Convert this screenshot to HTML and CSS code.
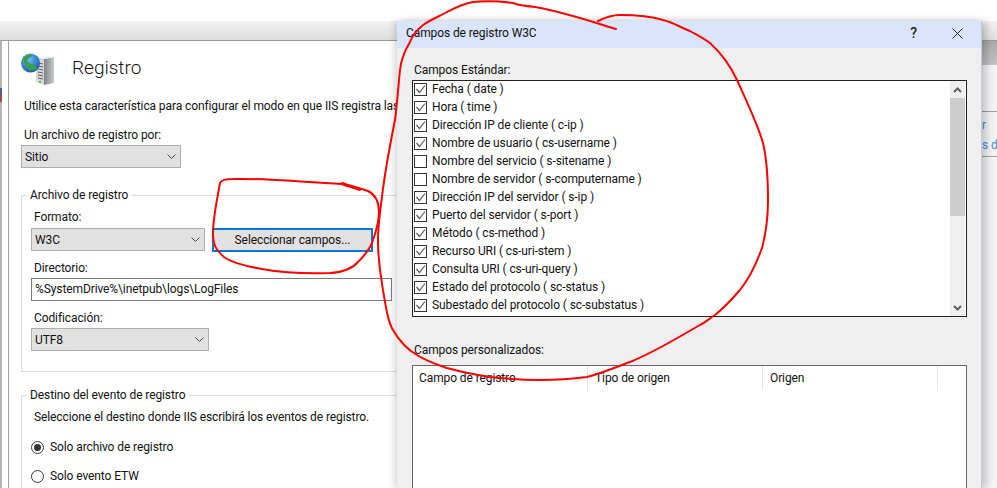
FILE: index.html
```html
<!DOCTYPE html>
<html lang="es">
<head>
<meta charset="utf-8">
<title>Registro</title>
<link rel="stylesheet" href="styles.css">
</head>
<body>
<div class="desktop">
  <div class="window">
    <div class="topbar"></div>
    <div class="workspace">
      <div class="side-strip"><div class="side-mark"></div></div>
      <main class="panel">
        <header class="panel-head">
          <svg class="iis-icon" width="34" height="34" viewBox="0 0 34 34">
            <defs>
              <linearGradient id="srv" x1="0" x2="1" y1="0" y2="0"><stop offset="0" stop-color="#7e8386"/><stop offset="1" stop-color="#c9cccd"/></linearGradient>
              <radialGradient id="glb" cx=".4" cy=".3" r=".8"><stop offset="0" stop-color="#6fc0f0"/><stop offset="1" stop-color="#0f4fa8"/></radialGradient>
            </defs>
            <path d="M24 7l10-2v26l-10 2z" fill="url(#srv)"/>
            <path d="M16 5l8 2v26l-8-3z" fill="#d5d7d8"/>
            <path d="M16 5l10-1 8 1-10 2z" fill="#f1f1f1"/>
            <path d="M18 11l5 1M18 14l5 1M18 17l5 1M18 20l5 1M18 23l5 1M18 26l5 1" stroke="#5f6366" stroke-width="1"/>
            <rect x="19" y="29" width="2" height="2" fill="#58c73a"/>
            <circle cx="10.500" cy="11" r="9.500" fill="url(#glb)"/>
            <path d="M3 7c2-3 5-5 8-5 1 2 0 3-2 4l-2 3 3 3 6 2 1 2c-2 2-5 3-8 2-1-3-5-6-6-11z" fill="#35a048"/>
          </svg>
          <h1 class="panel-title">Registro</h1>
        </header>
        <p class="intro">Utilice esta característica para configurar el modo en que IIS registra las</p>
        <label class="caption first">Un archivo de registro por:</label>
        <div class="select select-site"><span>Sitio</span>
          <svg class="chev" width="9" height="6" viewBox="0 0 9 6"><path d="M.5.500L4.500 4.500 8.500.5" fill="none" stroke="#444" stroke-width="1"/></svg>
        </div>
        <fieldset class="group group-file">
          <legend>Archivo de registro</legend>
          <label class="caption cap-fmt">Formato:</label>
          <div class="format-row">
            <div class="select select-format"><span>W3C</span>
              <svg class="chev" width="9" height="6" viewBox="0 0 9 6"><path d="M.5.500L4.500 4.500 8.500.5" fill="none" stroke="#444" stroke-width="1"/></svg>
            </div>
            <button class="btn-fields" type="button">Seleccionar campos...</button>
          </div>
          <label class="caption cap-dir">Directorio:</label>
          <div class="textbox">%SystemDrive%\inetpub\logs\LogFiles</div>
          <label class="caption cap-enc">Codificación:</label>
          <div class="select select-enc"><span>UTF8</span>
            <svg class="chev" width="9" height="6" viewBox="0 0 9 6"><path d="M.5.500L4.500 4.500 8.500.5" fill="none" stroke="#444" stroke-width="1"/></svg>
          </div>
        </fieldset>
        <fieldset class="group group-dest">
          <legend>Destino del evento de registro</legend>
          <p class="dest-text">Seleccione el destino donde IIS escribirá los eventos de registro.</p>
          <div class="radio-row"><span class="radio on"></span>Solo archivo de registro</div>
          <div class="radio-row"><span class="radio"></span>Solo evento ETW</div>
        </fieldset>
      </main>
      <aside class="right-pane">
        <div class="right-band"></div>
        <div class="right-links"><span>r</span><span>s d</span></div>
      </aside>
    </div>
  </div>

  <section class="dialog">
    <div class="dialog-title">
      <span class="dialog-name">Campos de registro W3C</span>
      <span class="help">?</span>
      <svg class="close" width="11" height="11" viewBox="0 0 11 11"><path d="M.5.5l10 10M10.500.5l-10 10" stroke="#222" stroke-width="1"/></svg>
    </div>
    <div class="dialog-body">
      <div class="dlg-label">Campos Estándar:</div>
      <div class="fields">
        <ul class="field-list">
          <li><span class="cb"><svg class="tick" width="11" height="11" viewBox="0 0 11 11"><path d="M1.500 5l3 3.500L10 1.500" fill="none" stroke="#5a5a5a" stroke-width="1.200"/></svg></span>Fecha ( date )</li>
          <li><span class="cb"><svg class="tick" width="11" height="11" viewBox="0 0 11 11"><path d="M1.500 5l3 3.500L10 1.500" fill="none" stroke="#5a5a5a" stroke-width="1.200"/></svg></span>Hora ( time )</li>
          <li><span class="cb"><svg class="tick" width="11" height="11" viewBox="0 0 11 11"><path d="M1.500 5l3 3.500L10 1.500" fill="none" stroke="#5a5a5a" stroke-width="1.200"/></svg></span>Dirección IP de cliente ( c-ip )</li>
          <li><span class="cb"><svg class="tick" width="11" height="11" viewBox="0 0 11 11"><path d="M1.500 5l3 3.500L10 1.500" fill="none" stroke="#5a5a5a" stroke-width="1.200"/></svg></span>Nombre de usuario ( cs-username )</li>
          <li><span class="cb"></span>Nombre del servicio ( s-sitename )</li>
          <li><span class="cb"></span>Nombre de servidor ( s-computername )</li>
          <li><span class="cb"><svg class="tick" width="11" height="11" viewBox="0 0 11 11"><path d="M1.500 5l3 3.500L10 1.500" fill="none" stroke="#5a5a5a" stroke-width="1.200"/></svg></span>Dirección IP del servidor ( s-ip )</li>
          <li><span class="cb"><svg class="tick" width="11" height="11" viewBox="0 0 11 11"><path d="M1.500 5l3 3.500L10 1.500" fill="none" stroke="#5a5a5a" stroke-width="1.200"/></svg></span>Puerto del servidor ( s-port )</li>
          <li><span class="cb"><svg class="tick" width="11" height="11" viewBox="0 0 11 11"><path d="M1.500 5l3 3.500L10 1.500" fill="none" stroke="#5a5a5a" stroke-width="1.200"/></svg></span>Método ( cs-method )</li>
          <li><span class="cb"><svg class="tick" width="11" height="11" viewBox="0 0 11 11"><path d="M1.500 5l3 3.500L10 1.500" fill="none" stroke="#5a5a5a" stroke-width="1.200"/></svg></span>Recurso URI ( cs-uri-stem )</li>
          <li><span class="cb"><svg class="tick" width="11" height="11" viewBox="0 0 11 11"><path d="M1.500 5l3 3.500L10 1.500" fill="none" stroke="#5a5a5a" stroke-width="1.200"/></svg></span>Consulta URI ( cs-uri-query )</li>
          <li><span class="cb"><svg class="tick" width="11" height="11" viewBox="0 0 11 11"><path d="M1.500 5l3 3.500L10 1.500" fill="none" stroke="#5a5a5a" stroke-width="1.200"/></svg></span>Estado del protocolo ( sc-status )</li>
          <li><span class="cb"><svg class="tick" width="11" height="11" viewBox="0 0 11 11"><path d="M1.500 5l3 3.500L10 1.500" fill="none" stroke="#5a5a5a" stroke-width="1.200"/></svg></span>Subestado del protocolo ( sc-substatus )</li>
        </ul>
        <div class="scrollbar">
          <div class="sb-btn"><svg width="9" height="6" viewBox="0 0 9 6"><path d="M1 5l3.500-3.500L8 5" fill="none" stroke="#606060" stroke-width="2"/></svg></div>
          <div class="sb-track"><div class="sb-thumb"></div></div>
          <div class="sb-btn"><svg width="9" height="6" viewBox="0 0 9 6"><path d="M1 1l3.500 3.500L8 1" fill="none" stroke="#606060" stroke-width="2"/></svg></div>
        </div>
      </div>
      <div class="dlg-label custom-label">Campos personalizados:</div>
      <div class="custom">
        <div class="custom-head">
          <span class="col">Campo de registro</span>
          <span class="col">Tipo de origen</span>
          <span class="col">Origen</span>
          <span class="col-end"></span>
        </div>
      </div>
    </div>
  </section>

  <svg class="annotations" width="997" height="488" viewBox="0 0 997 488" fill="none" stroke="#f00" stroke-width="2" stroke-linecap="round" stroke-linejoin="round">
    <path d="M360 190C352 187 346 186 342 184C300 182 262 178 233 179C226 179 221 180 220 183C217 200 213 218 213 233C213 245 216 250 224 257C232 263 245 266 262 269C285 273 305 274 330 273C345 272 353 268 358 262C364 256 369 250 372 243C376 232 379 220 379 212C379 203 376 195 368 191C360 188 350 186 342 183"/>
    <path d="M616 29C590 21 560 11 535 7C525 6 518 5 513 3C498 1 485 1 473 2C462 4 455 8 447 12C438 17 430 20 423 25C417 30 412 36 410 42C404 52 401 60 400 70C398 90 397 105 395 120C391 140 385 170 382 197C380 212 378 225 378 240C378 262 380 272 383 290C386 308 388 322 393 330C400 342 408 350 417 355C428 362 438 365 447 368C462 372 476 375 490 377C508 379 525 380 540 380C558 380 572 379 587 377C603 373 616 367 630 362C655 352 677 338 700 325C706 322 710 318 715 315C725 307 733 298 740 290C748 280 757 262 762 248C766 233 768 215 768 200C768 180 767 160 763 143C758 125 746 100 737 80C730 65 720 52 710 43C703 38 697 35 690 31C680 27 672 22 663 20C650 16 635 15 620 15C610 15 604 18 598 21"/>
  </svg>
</div>
</body>
</html>
```
FILE: styles.css
```css
* { box-sizing: border-box; }
html, body { margin: 0; padding: 0; background: #fff; }
body { font-family: Roboto, "Noto Sans", sans-serif; font-size: 12px; letter-spacing: -0.1px; color: #111; }
.desktop { position: relative; width: 997px; height: 488px; overflow: hidden; background: #fff; }

.window { display: flex; flex-direction: column; margin-top: 21px; height: 467px; }
.topbar { height: 20px; background: linear-gradient(#f2f2f2, #dedede); border-bottom: 1px solid #9a9a9a; flex: none; }
.workspace { display: flex; flex: 1; min-height: 0; }
.side-strip { width: 9px; flex: none; background: #fff; border-left: 2px solid #b4b4b4; border-right: 1px solid #a0a0a0; }
.side-mark { width: 2px; height: 14px; margin: 47px 0 0 -2px; background: linear-gradient(#3a5fb0, #c04040); }
.panel { width: 973px; flex: none; background: #fff; padding: 11px 0 0 12px; overflow: hidden; }
.right-pane { flex: 1; background: #f4f4f4; overflow: hidden; }

.panel-head { display: flex; align-items: center; height: 34px; margin-left: -1px; }
.iis-icon { flex: none; }
.panel-title { margin: 0 0 3px 18px; font-size: 19px; font-weight: 300; line-height: 26px; letter-spacing: 0; }
.intro { margin: 11px 0 0 3px; line-height: 18px; white-space: nowrap; }
.caption { display: block; line-height: 16px; margin-left: 3px; }
.caption.first { margin-top: 12px; }

.select { display: flex; align-items: center; justify-content: space-between; height: 23px; background: #e1e1e1; border: 1px solid #adadad; padding: 0 4px 0 3px; }
.select-site { width: 160px; margin-top: 2px; }
.select-format { width: 174px; flex: none; }
.select-enc { width: 178px; margin-top: 2px; }

.group { margin: 0; padding: 0 0 0 9px; border: 1px solid #dcdcdc; border-right: none; width: 960px; }
.group legend { padding: 0 3px; margin-left: -4px; line-height: 16px; }
.group-file { margin-top: 19px; height: 185px; }
.cap-fmt { margin-top: 6px; }
.format-row { display: flex; align-items: flex-start; gap: 7px; margin-top: 3px; }
.btn-fields { width: 161px; height: 24px; background: #e1e1e1; border: 2px solid #0078d7; font: inherit; letter-spacing: inherit; color: inherit; padding: 0; }
.cap-dir { margin-top: 8px; }
.textbox { width: 361px; height: 23px; margin-top: 2px; border: 1px solid #7a7a7a; background: #fff; padding: 0 3px; line-height: 21px; white-space: nowrap; }
.cap-enc { margin-top: 9px; }

.group-dest { margin-top: 15px; height: 140px; }
.dest-text { margin: 6px 0 0 3px; line-height: 16px; white-space: nowrap; }
.radio-row { display: flex; align-items: center; height: 16px; margin-top: 14px; }
.radio-row + .radio-row { margin-top: 13px; }
.radio { width: 13px; height: 13px; margin-right: 6px; border: 1px solid #333; border-radius: 50%; background: #fff; position: relative; flex: none; }
.radio.on::after { content: ""; position: absolute; left: 2px; top: 2px; width: 7px; height: 7px; border-radius: 50%; background: #333; }

.right-band { height: 24px; background: linear-gradient(#a9a8a9, #c4c4c4); }
.right-links { display: flex; flex-direction: column; margin-top: 46px; border-top: 1px solid #a0a0a0; border-bottom: 1px solid #a0a0a0; padding: 3px 0 0; height: 46px; color: #3f8bd6; font-size: 12px; line-height: 20px; white-space: nowrap; }

.dialog { position: absolute; left: 397px; top: 21px; width: 585px; height: 467px; background: #efefef; box-shadow: -4px 0 6px rgba(0,0,0,.12), 5px 0 7px rgba(0,0,0,.18); border-right: 1px solid #c2cbdc; }
.dialog-title { display: flex; align-items: center; height: 27px; background: #d9e5fb; padding: 0 18px 3px 9px; }
.dialog-name { flex: 1; }
.help { font-size: 14px; font-weight: 500; margin-right: 35px; color: #222; }
.dialog-body { padding: 13px 15px 0 15px; }
.dlg-label { line-height: 18px; margin-left: 2px; }
.fields { display: flex; width: 555px; height: 237px; margin-top: 1px; background: #fff; border: 1px solid #222; padding-left: 1px; }
.field-list { list-style: none; flex: 1; margin: -1px 0 0; padding: 0; }
.field-list li { display: flex; align-items: center; height: 18px; white-space: nowrap; }
.cb { width: 13px; height: 13px; margin-right: 5px; border: 1px solid #333; background: #fff; flex: none; }
.tick { display: block; }
.scrollbar { width: 15px; margin-right: 1px; background: #efefef; display: flex; flex-direction: column; }
.sb-btn { height: 17px; flex: none; display: flex; align-items: center; justify-content: center; }
.sb-track { flex: 1; }
.sb-thumb { height: 118px; background: #cdcdcd; }
.custom-label { margin-top: 24px; }
.custom { width: 555px; height: 140px; margin-top: 6px; background: #fff; border: 1px solid #666; }
.custom-head { display: flex; height: 24px; }
.col { width: 175px; flex: none; padding: 3px 0 0 7px; border-right: 1px solid #e5e5e5; line-height: 18px; }
.col:first-child { padding-left: 6px; }
.col-end { flex: 1; }

.annotations { position: absolute; left: 0; top: 0; pointer-events: none; }
```
